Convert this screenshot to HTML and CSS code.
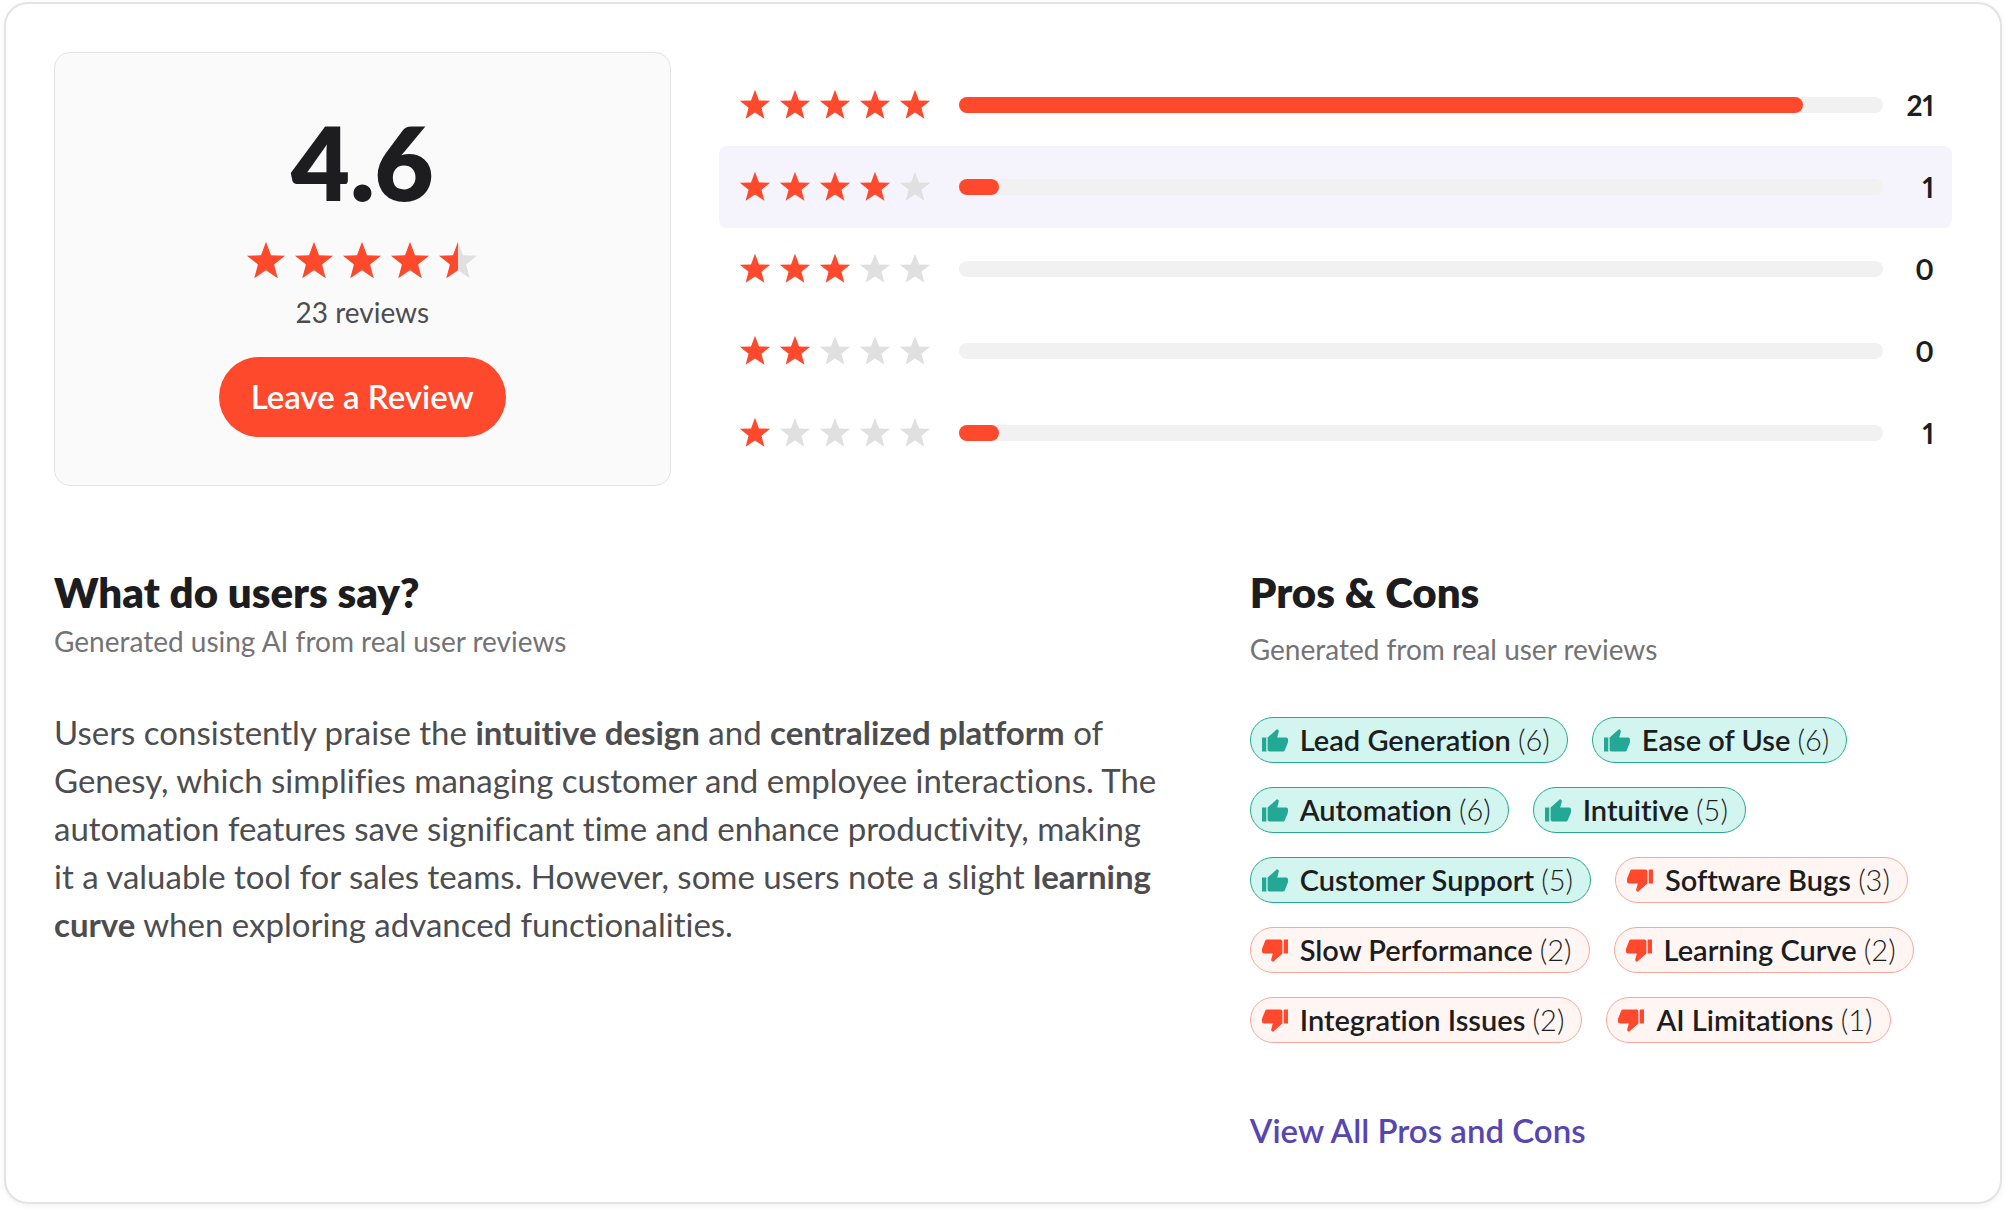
FILE: index.html
```html
<!DOCTYPE html>
<html lang="en">
<head>
    <meta charset="UTF-8">
    <meta name="viewport" content="width=device-width, initial-scale=1.0">
    <title>Genesy Reviews</title>
    <link rel="stylesheet" href="styles.css">
</head>
<body>
    <!-- Icon shapes -->
    <svg class="icon-defs" aria-hidden="true">
        <symbol id="star" viewBox="0 0 24 24">
            <path d="M12 .5 15 8.57 23.41 8.8 16.85 14.1 19.05 22.3 12 17.6 4.95 22.3 7.15 14.1 .59 8.8 9 8.57Z"/>
        </symbol>
        <symbol id="star-half" viewBox="0 0 24 24">
            <path class="star-rest" d="M12 .5 15 8.57 23.41 8.8 16.85 14.1 19.05 22.3 12 17.6Z"/>
            <path d="M12 .5V17.6L4.95 22.3 7.15 14.1 .59 8.8 9 8.57Z"/>
        </symbol>
        <symbol id="thumb" viewBox="0 0 26 23">
            <path d="M0 8.5h4.3v14H0z"/>
            <path d="M5.6 8.6 14.6.4q.5-.5 1 0l.9.9q.5.5.3 1.2L15.2 8.6h8.9q1.9 0 1.9 1.9v2.3q0 .5-.2 1l-3.1 7.6q-.4 1.1-1.6 1.1H7.4q-1.8 0-1.8-1.8z"/>
        </symbol>
    </svg>

    <div class="card">
        <div class="summary">
            <div class="score-box">
                <div class="score">4.6</div>
                <div class="stars stars-large" role="img" aria-label="4.6 out of 5 stars">
                    <svg><use href="#star"/></svg><svg><use href="#star"/></svg><svg><use href="#star"/></svg><svg><use href="#star"/></svg><svg><use href="#star-half"/></svg>
                </div>
                <p class="review-count">23 reviews</p>
                <button type="button" class="review-btn">Leave a Review</button>
            </div>

            <div class="breakdown">
                <div class="rating-row">
                    <div class="stars" role="img" aria-label="5 stars">
                        <svg><use href="#star"/></svg><svg><use href="#star"/></svg><svg><use href="#star"/></svg><svg><use href="#star"/></svg><svg><use href="#star"/></svg>
                    </div>
                    <div class="bar"><div class="bar-fill" style="width: 91.3%"></div></div>
                    <span class="count">21</span>
                </div>
                <div class="rating-row active">
                    <div class="stars" role="img" aria-label="4 stars">
                        <svg><use href="#star"/></svg><svg><use href="#star"/></svg><svg><use href="#star"/></svg><svg><use href="#star"/></svg><svg class="empty"><use href="#star"/></svg>
                    </div>
                    <div class="bar"><div class="bar-fill" style="width: 4.35%"></div></div>
                    <span class="count">1</span>
                </div>
                <div class="rating-row">
                    <div class="stars" role="img" aria-label="3 stars">
                        <svg><use href="#star"/></svg><svg><use href="#star"/></svg><svg><use href="#star"/></svg><svg class="empty"><use href="#star"/></svg><svg class="empty"><use href="#star"/></svg>
                    </div>
                    <div class="bar"></div>
                    <span class="count">0</span>
                </div>
                <div class="rating-row">
                    <div class="stars" role="img" aria-label="2 stars">
                        <svg><use href="#star"/></svg><svg><use href="#star"/></svg><svg class="empty"><use href="#star"/></svg><svg class="empty"><use href="#star"/></svg><svg class="empty"><use href="#star"/></svg>
                    </div>
                    <div class="bar"></div>
                    <span class="count">0</span>
                </div>
                <div class="rating-row">
                    <div class="stars" role="img" aria-label="1 star">
                        <svg><use href="#star"/></svg><svg class="empty"><use href="#star"/></svg><svg class="empty"><use href="#star"/></svg><svg class="empty"><use href="#star"/></svg><svg class="empty"><use href="#star"/></svg>
                    </div>
                    <div class="bar"><div class="bar-fill" style="width: 4.35%"></div></div>
                    <span class="count">1</span>
                </div>
            </div>
        </div>

        <div class="details">
            <div class="users-say">
                <h2>What do users say?</h2>
                <p class="note">Generated using AI from real user reviews</p>
                <p class="review-text">Users consistently praise the <b>intuitive design</b> and <b>centralized platform</b> of Genesy, which simplifies managing customer and employee interactions. The automation features save significant time and enhance productivity, making it a valuable tool for sales teams. However, some users note a slight <b>learning curve</b> when exploring advanced functionalities.</p>
            </div>

            <div class="pros-cons">
                <h2>Pros &amp; Cons</h2>
                <p class="note">Generated from real user reviews</p>
                <div class="tags">
                    <a href="#" class="tag pro"><svg><use href="#thumb"/></svg><span>Lead Generation <small>(6)</small></span></a>
                    <a href="#" class="tag pro"><svg><use href="#thumb"/></svg><span>Ease of Use <small>(6)</small></span></a>
                    <a href="#" class="tag pro"><svg><use href="#thumb"/></svg><span>Automation <small>(6)</small></span></a>
                    <a href="#" class="tag pro"><svg><use href="#thumb"/></svg><span>Intuitive <small>(5)</small></span></a>
                    <a href="#" class="tag pro"><svg><use href="#thumb"/></svg><span>Customer Support <small>(5)</small></span></a>
                    <a href="#" class="tag con"><svg><use href="#thumb"/></svg><span>Software Bugs <small>(3)</small></span></a>
                    <a href="#" class="tag con"><svg><use href="#thumb"/></svg><span>Slow Performance <small>(2)</small></span></a>
                    <a href="#" class="tag con"><svg><use href="#thumb"/></svg><span>Learning Curve <small>(2)</small></span></a>
                    <a href="#" class="tag con"><svg><use href="#thumb"/></svg><span>Integration Issues <small>(2)</small></span></a>
                    <a href="#" class="tag con"><svg><use href="#thumb"/></svg><span>AI Limitations <small>(1)</small></span></a>
                </div>
                <a href="#" class="view-all">View All Pros and Cons</a>
            </div>
        </div>
    </div>
</body>
</html>
```
FILE: styles.css
```css
* {
    box-sizing: border-box;
}

body {
    font-family: Lato, "Open Sans", sans-serif;
    font-variant-ligatures: none;
    margin: 0;
    padding: 2px 4px 6px;
    background-color: #fff;
    color: #1d1d1f;
}

h2,
p {
    margin: 0;
}

a {
    text-decoration: none;
}

.icon-defs {
    display: none;
}

.card {
    padding: 48px;
    background-color: #fff;
    border: 2px solid #e3e3e3;
    border-radius: 24px;
    box-shadow: 0 2px 6px rgba(0, 0, 0, 0.05);
}

/* Score and rating breakdown */
.summary {
    display: grid;
    grid-template-columns: 1fr 2fr;
    gap: 48px;
}

.score-box {
    display: flex;
    flex-direction: column;
    align-items: center;
    padding: 48px;
    background-color: #fafafa;
    border: 1px solid #e3e3e3;
    border-radius: 16px;
}

.score {
    font-size: 102px;
    font-weight: 800;
    line-height: 122px;
}

.stars {
    display: flex;
    gap: 8px;
    fill: #ff492c;
}

.stars svg {
    width: 32px;
    height: 32px;
}

.stars .empty,
.star-rest {
    fill: #e0e0e0;
}

.stars-large {
    margin-top: 18px;
}

.stars-large svg {
    width: 40px;
    height: 40px;
}

.review-count {
    margin-top: 12px;
    font-size: 28px;
    line-height: 38px;
    color: #4d4d50;
}

.review-btn {
    margin-top: 26px;
    padding: 0 32px 2px;
    height: 80px;
    border: none;
    border-radius: 40px;
    background-color: #ff492c;
    color: #fff;
    font-family: inherit;
    font-size: 33px;
    font-weight: 600;
    cursor: pointer;
}

.breakdown {
    display: flex;
    flex-direction: column;
    justify-content: center;
}

.rating-row {
    display: flex;
    align-items: center;
    height: 82px;
    padding: 0 18px 0 20px;
    border-radius: 8px;
}

.rating-row.active {
    background-color: #f5f4fd;
}

.bar {
    flex: 1;
    height: 16px;
    margin-left: 28px;
    border-radius: 8px;
    background-color: #f1f1f1;
}

.bar-fill {
    height: 16px;
    border-radius: 8px;
    background-color: #ff492c;
}

.count {
    width: 51px;
    text-align: right;
    font-size: 28px;
    font-weight: 700;
    font-variant-numeric: proportional-nums;
}

/* Review text and tags */
.details {
    display: grid;
    grid-template-columns: 1fr 37%;
    gap: 88px;
    margin-top: 82px;
}

.details h2 {
    font-size: 42px;
    font-weight: 800;
    line-height: 48px;
}

.note {
    margin-top: 8px;
    font-size: 28px;
    line-height: 34px;
    color: #737376;
}

.pros-cons .note {
    margin-top: 16px;
}

.review-text {
    margin-top: 50px;
    font-size: 33px;
    line-height: 48px;
    color: #4d4d50;
}

.tags {
    display: flex;
    flex-wrap: wrap;
    gap: 24px;
    margin-top: 51px;
}

.tag {
    display: flex;
    align-items: center;
    gap: 12px;
    height: 46px;
    padding: 0 17px 0 11px;
    border: 1px solid;
    border-radius: 23px;
    font-size: 29px;
    font-weight: 600;
    line-height: 44px;
}

.tag span {
    color: #1d1d1f;
}

.tag svg {
    width: 26px;
    height: 23px;
}

.tag small {
    font-size: inherit;
    font-weight: 300;
}

.pro {
    background-color: #d2f5ef;
    border-color: #27a893;
    fill: #23a895;
}

.con {
    background-color: #fff5f3;
    border-color: #f9a79a;
    fill: #ff492c;
}

.con svg {
    transform: rotate(180deg);
}

.view-all {
    display: inline-block;
    margin-top: 63px;
    font-size: 33px;
    font-weight: 600;
    line-height: 48px;
    color: #5746b2;
}
```
